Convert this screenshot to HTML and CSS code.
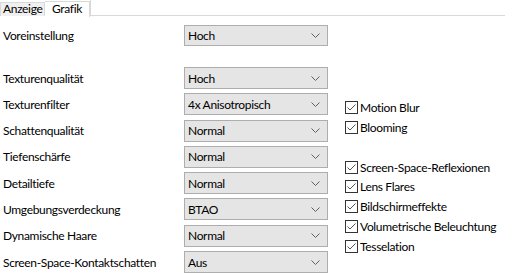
FILE: index.html
```html
<!DOCTYPE html>
<html>
<head>
<meta charset="utf-8">
<link rel="stylesheet" href="styles.css">
</head>
<body>
<div class="tabs">
  <div class="tab">Anzeige</div>
  <div class="tab active">Grafik</div>
  <div class="tab-rest"></div>
</div>
<div class="page">
  <div class="left">
    <div class="row preset">
      <span class="label">Voreinstellung</span>
      <div class="combo"><span>Hoch</span><svg class="chev" width="9" height="5" viewBox="0 0 9 5"><path d="M0.5 0.5 L4.5 4.5 L8.5 0.5" fill="none" stroke="#606060" stroke-width="1"/></svg></div>
    </div>
    <div class="grid">
      <span class="label">Texturenqualität</span>
      <div class="combo"><span>Hoch</span><svg class="chev" width="9" height="5" viewBox="0 0 9 5"><path d="M0.5 0.5 L4.5 4.5 L8.5 0.5" fill="none" stroke="#606060" stroke-width="1"/></svg></div>
      <span class="label">Texturenfilter</span>
      <div class="combo"><span>4x Anisotropisch</span><svg class="chev" width="9" height="5" viewBox="0 0 9 5"><path d="M0.5 0.5 L4.5 4.5 L8.5 0.5" fill="none" stroke="#606060" stroke-width="1"/></svg></div>
      <span class="label">Schattenqualität</span>
      <div class="combo"><span>Normal</span><svg class="chev" width="9" height="5" viewBox="0 0 9 5"><path d="M0.5 0.5 L4.5 4.5 L8.5 0.5" fill="none" stroke="#606060" stroke-width="1"/></svg></div>
      <span class="label">Tiefenschärfe</span>
      <div class="combo"><span>Normal</span><svg class="chev" width="9" height="5" viewBox="0 0 9 5"><path d="M0.5 0.5 L4.5 4.5 L8.5 0.5" fill="none" stroke="#606060" stroke-width="1"/></svg></div>
      <span class="label">Detailtiefe</span>
      <div class="combo"><span>Normal</span><svg class="chev" width="9" height="5" viewBox="0 0 9 5"><path d="M0.5 0.5 L4.5 4.5 L8.5 0.5" fill="none" stroke="#606060" stroke-width="1"/></svg></div>
      <span class="label">Umgebungsverdeckung</span>
      <div class="combo"><span>BTAO</span><svg class="chev" width="9" height="5" viewBox="0 0 9 5"><path d="M0.5 0.5 L4.5 4.5 L8.5 0.5" fill="none" stroke="#606060" stroke-width="1"/></svg></div>
      <span class="label">Dynamische Haare</span>
      <div class="combo"><span>Normal</span><svg class="chev" width="9" height="5" viewBox="0 0 9 5"><path d="M0.5 0.5 L4.5 4.5 L8.5 0.5" fill="none" stroke="#606060" stroke-width="1"/></svg></div>
      <span class="label">Screen-Space-Kontaktschatten</span>
      <div class="combo"><span>Aus</span><svg class="chev" width="9" height="5" viewBox="0 0 9 5"><path d="M0.5 0.5 L4.5 4.5 L8.5 0.5" fill="none" stroke="#606060" stroke-width="1"/></svg></div>
    </div>
  </div>
  <div class="right">
    <div class="group">
      <div class="check"><span class="box"><svg width="11" height="11" viewBox="0 0 11 11"><path d="M1.5 5.5 L4 8 L9.5 2.5" fill="none" stroke="#555" stroke-width="1"/></svg></span>Motion Blur</div>
      <div class="check"><span class="box"><svg width="11" height="11" viewBox="0 0 11 11"><path d="M1.5 5.5 L4 8 L9.5 2.5" fill="none" stroke="#555" stroke-width="1"/></svg></span>Blooming</div>
    </div>
    <div class="group second">
      <div class="check"><span class="box"><svg width="11" height="11" viewBox="0 0 11 11"><path d="M1.5 5.5 L4 8 L9.5 2.5" fill="none" stroke="#555" stroke-width="1"/></svg></span>Screen-Space-Reflexionen</div>
      <div class="check"><span class="box"><svg width="11" height="11" viewBox="0 0 11 11"><path d="M1.5 5.5 L4 8 L9.5 2.5" fill="none" stroke="#555" stroke-width="1"/></svg></span>Lens Flares</div>
      <div class="check"><span class="box"><svg width="11" height="11" viewBox="0 0 11 11"><path d="M1.5 5.5 L4 8 L9.5 2.5" fill="none" stroke="#555" stroke-width="1"/></svg></span>Bildschirmeffekte</div>
      <div class="check"><span class="box"><svg width="11" height="11" viewBox="0 0 11 11"><path d="M1.5 5.5 L4 8 L9.5 2.5" fill="none" stroke="#555" stroke-width="1"/></svg></span>Volumetrische Beleuchtung</div>
      <div class="check"><span class="box"><svg width="11" height="11" viewBox="0 0 11 11"><path d="M1.5 5.5 L4 8 L9.5 2.5" fill="none" stroke="#555" stroke-width="1"/></svg></span>Tesselation</div>
    </div>
  </div>
</div>
</body>
</html>
```

FILE: styles.css
```css
html, body {
  margin: 0;
  padding: 0;
  background: #ffffff;
}
body {
  font-family: Lato, "Noto Sans", sans-serif;
  font-size: 12px;
  letter-spacing: -0.33px;
  color: #000;
  width: 505px;
  height: 275px;
  overflow: hidden;
}
.tabs {
  display: flex;
  align-items: flex-end;
  height: 16px;
}
.tab {
  box-sizing: border-box;
  height: 14px;
  padding: 0 0 0 2px;
  background: #f0f0f0;
  border: 1px solid #d9d9d9;
  border-bottom: none;
  line-height: 12px;
  width: 45px;
  white-space: nowrap;
}
.tab.active {
  background: #fff;
  height: 16px;
  width: 45px;
  padding-left: 7px;
  line-height: 13px;
  border-left: none;
  position: relative;
  top: 1px;
}
.tab-rest {
  flex: 1;
  height: 16px;
  border-bottom: 1px solid #d9d9d9;
  border-left: 1px solid #d9d9d9;
  box-sizing: border-box;
}
.page {
  display: flex;
  padding-left: 3px;
}
.left {
  width: 324px;
  padding-top: 9px;
}
.row {
  display: grid;
  grid-template-columns: 181px 144px;
  align-items: center;
  height: 21px;
}
.grid {
  display: grid;
  grid-template-columns: 181px 144px;
  grid-auto-rows: 22px;
  row-gap: 4.3px;
  align-items: center;
  margin-top: 21px;
}
.label {
  white-space: nowrap;
}
.combo {
  box-sizing: border-box;
  height: 21px;
  background: #e5e5e5;
  border: 1px solid #adadad;
  display: flex;
  align-items: center;
  justify-content: space-between;
  padding: 0 7px 0 3px;
}
.grid .combo {
  height: 22px;
}
.chev {
  display: block;
}
.right {
  padding-left: 18px;
  padding-top: 85px;
}
.group {
  display: flex;
  flex-direction: column;
  gap: 6.3px;
}
.group.second {
  margin-top: 26px;
}
.check {
  display: flex;
  align-items: center;
  height: 13.5px;
  white-space: nowrap;
}
.box {
  box-sizing: border-box;
  width: 13px;
  height: 13px;
  border: 1px solid #333;
  background: #fff;
  margin-right: 2px;
  display: flex;
}
.box svg {
  display: block;
}
```
